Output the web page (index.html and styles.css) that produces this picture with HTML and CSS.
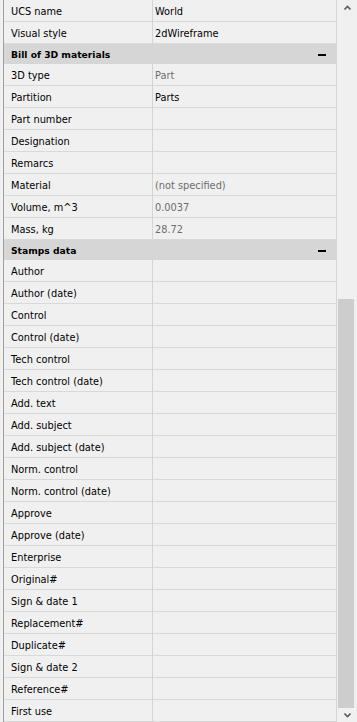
FILE: index.html
```html
<!DOCTYPE html>
<html lang="en">
<head>
  <meta charset="UTF-8" />
  <title>Properties</title>
  <link rel="stylesheet" href="styles.css">
</head>
<body>

  <div class="panel">
    <div class="grid">
      <div class="row"><div class="label">UCS name</div><div class="value">World</div></div>
      <div class="row"><div class="label">Visual style</div><div class="value">2dWireframe</div></div>

      <!-- Bill of materials -->
      <div class="section"><span>Bill of 3D materials</span><i class="minus"></i></div>
      <div class="row"><div class="label">3D type</div><div class="value muted">Part</div></div>
      <div class="row"><div class="label">Partition</div><div class="value">Parts</div></div>
      <div class="row"><div class="label">Part number</div><div class="value"></div></div>
      <div class="row"><div class="label">Designation</div><div class="value"></div></div>
      <div class="row"><div class="label">Remarcs</div><div class="value"></div></div>
      <div class="row"><div class="label">Material</div><div class="value muted">(not specified)</div></div>
      <div class="row"><div class="label">Volume, m^3</div><div class="value muted">0.0037</div></div>
      <div class="row"><div class="label">Mass, kg</div><div class="value muted">28.72</div></div>

      <!-- Stamps -->
      <div class="section"><span>Stamps data</span><i class="minus"></i></div>
      <div class="row"><div class="label">Author</div><div class="value"></div></div>
      <div class="row"><div class="label">Author (date)</div><div class="value"></div></div>
      <div class="row"><div class="label">Control</div><div class="value"></div></div>
      <div class="row"><div class="label">Control (date)</div><div class="value"></div></div>
      <div class="row"><div class="label">Tech control</div><div class="value"></div></div>
      <div class="row"><div class="label">Tech control (date)</div><div class="value"></div></div>
      <div class="row"><div class="label">Add. text</div><div class="value"></div></div>
      <div class="row"><div class="label">Add. subject</div><div class="value"></div></div>
      <div class="row"><div class="label">Add. subject (date)</div><div class="value"></div></div>
      <div class="row"><div class="label">Norm. control</div><div class="value"></div></div>
      <div class="row"><div class="label">Norm. control (date)</div><div class="value"></div></div>
      <div class="row"><div class="label">Approve</div><div class="value"></div></div>
      <div class="row"><div class="label">Approve (date)</div><div class="value"></div></div>
      <div class="row"><div class="label">Enterprise</div><div class="value"></div></div>
      <div class="row"><div class="label">Original#</div><div class="value"></div></div>
      <div class="row"><div class="label">Sign &amp; date 1</div><div class="value"></div></div>
      <div class="row"><div class="label">Replacement#</div><div class="value"></div></div>
      <div class="row"><div class="label">Duplicate#</div><div class="value"></div></div>
      <div class="row"><div class="label">Sign &amp; date 2</div><div class="value"></div></div>
      <div class="row"><div class="label">Reference#</div><div class="value"></div></div>
      <div class="row"><div class="label">First use</div><div class="value"></div></div>
    </div>

    <div class="scrollbar">
      <svg class="arrow" width="7" height="5" viewBox="0 0 7 5"><path d="M0.5 4.5 L3.5 1.5 L6.5 4.5" fill="none" stroke="#606060" stroke-width="1.6"/></svg>
      <div class="track"><div class="thumb"></div></div>
      <svg class="arrow" width="7" height="5" viewBox="0 0 7 5"><path d="M0.5 0.5 L3.5 3.5 L6.5 0.5" fill="none" stroke="#606060" stroke-width="1.6"/></svg>
    </div>
  </div>

</body>
</html>
```

FILE: styles.css
```css
html, body {
  margin: 0;
  background: #f0f0f0;
  font-family: "DejaVu Sans", Verdana, sans-serif;
  font-size: 9.8px;
  color: #000;
}
.panel {
  display: flex;
  height: 722px;
  padding-left: 3px;
  overflow: hidden;
}
.grid {
  width: 332px;
  border-left: 1px solid #a0a0a0;
  border-right: 1px solid #d4d4d4;
}
.row {
  display: grid;
  grid-template-columns: 149px 1fr;
  height: 21px;
  border-bottom: 1px solid #d9d9d9;
}
.label {
  padding: 1px 0 0 7px;
  line-height: 21px;
  border-right: 1px solid #d4d4d4;
  white-space: nowrap;
}
.value {
  padding: 1px 0 0 2px;
  line-height: 21px;
  white-space: nowrap;
}
.muted {
  color: #6d6d6d;
}
.section {
  display: flex;
  justify-content: space-between;
  align-items: center;
  height: 20px;
  padding: 0 10px 0 7px;
  background: #d6d6d6;
  font-weight: bold;
  font-size: 9.2px;
}
.minus {
  width: 8px;
  height: 2px;
  background: #000;
  margin-top: 1px;
}
.scrollbar {
  width: 20px;
  display: flex;
  flex-direction: column;
  align-items: center;
}
.arrow {
  margin: 5px 0 4px 1px;
}
.track {
  flex: 1;
  width: 100%;
  position: relative;
}
.thumb {
  position: absolute;
  left: 1px;
  width: 16px;
  top: 285px;
  bottom: 0;
  background: #cdcdcd;
}
```
